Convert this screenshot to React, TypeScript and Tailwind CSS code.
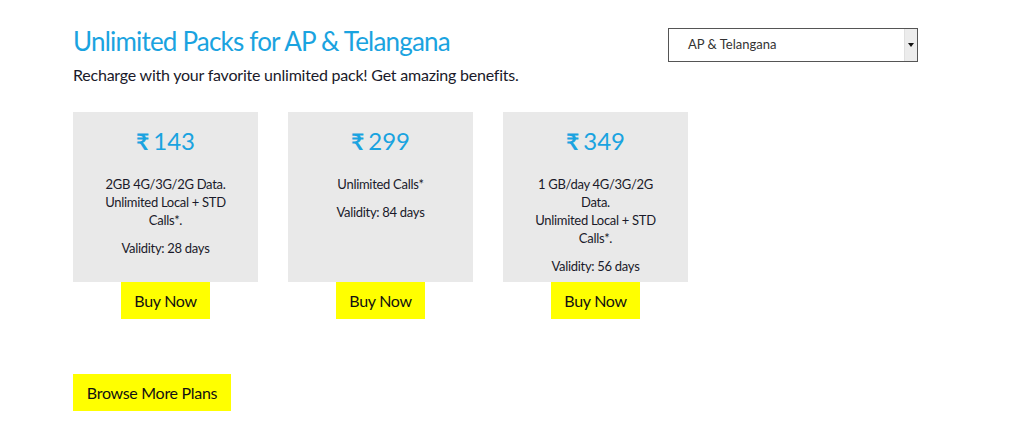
import React from "react";

const plans = [
  { price: "143", lines: ["2GB 4G/3G/2G Data.", "Unlimited Local + STD Calls*."], validity: "Validity: 28 days" },
  { price: "299", lines: ["Unlimited Calls*"], validity: "Validity: 84 days" },
  { price: "349", lines: ["1 GB/day 4G/3G/2G Data.", "Unlimited Local + STD Calls*."], validity: "Validity: 56 days" },
];

export default function App() {
  return (
    <div className="w-[1013px] h-[425px] bg-white text-[#1a1a2a]" style={{ fontFamily: "Lato, 'Open Sans', sans-serif" }}>
      <div className="pl-[73px] pt-[26px] flex">
        <div className="w-[595px]">
          <h1 className="text-[26px] leading-[30px] text-[#1aa3e0] font-normal tracking-[-0.8px]">Unlimited Packs for AP &amp; Telangana</h1>
          <p className="mt-[9px] text-[16px] leading-[20px] tracking-[-0.22px]">Recharge with your favorite unlimited pack! Get amazing benefits.</p>
        </div>
        <div className="mt-[2px] w-[250px] h-[34px] border border-[#555] flex items-stretch">
          <div className="flex-1 pl-[19px] flex items-center text-[13px] text-[#333]">AP &amp; Telangana</div>
          <div className="w-[13px] bg-[#ececec] border-l border-[#e0e0e0] flex items-center justify-center">
            <svg width="6" height="4" viewBox="0 0 6 4"><path d="M0 0H6L3 4Z" fill="#111" /></svg>
          </div>
        </div>
      </div>

      <div className="pl-[73px] mt-[27px] flex gap-[30px]">
        {plans.map((p) => (
          <div key={p.price} className="w-[185px] flex flex-col items-center">
            <div className="w-[185px] h-[170px] bg-[#e9e9e9] pt-[15px] px-[24px] flex flex-col items-center text-center">
              <div className="text-[#1aa3e0] text-[24px] leading-[28px] flex items-center">
                <span className="font-bold text-[23px] mr-[4px]">₹</span>
                <span>{p.price}</span>
              </div>
              <div className="mt-[20px] text-[13px] leading-[18px] tracking-[-0.3px]">
                {p.lines.map((l) => (
                  <div key={l}>{l}</div>
                ))}
              </div>
              <div className="mt-[10px] text-[13px] leading-[18px] tracking-[-0.3px]">{p.validity}</div>
            </div>
            <button className="w-[89px] h-[37px] bg-[#ffff00] text-[16px] text-[#111] tracking-[-0.3px]">Buy Now</button>
          </div>
        ))}
      </div>

      <div className="pl-[73px] mt-[55px]">
        <button className="w-[158px] h-[37px] bg-[#ffff00] text-[16px] text-[#111] tracking-[-0.3px]">Browse More Plans</button>
      </div>
    </div>
  );
}
